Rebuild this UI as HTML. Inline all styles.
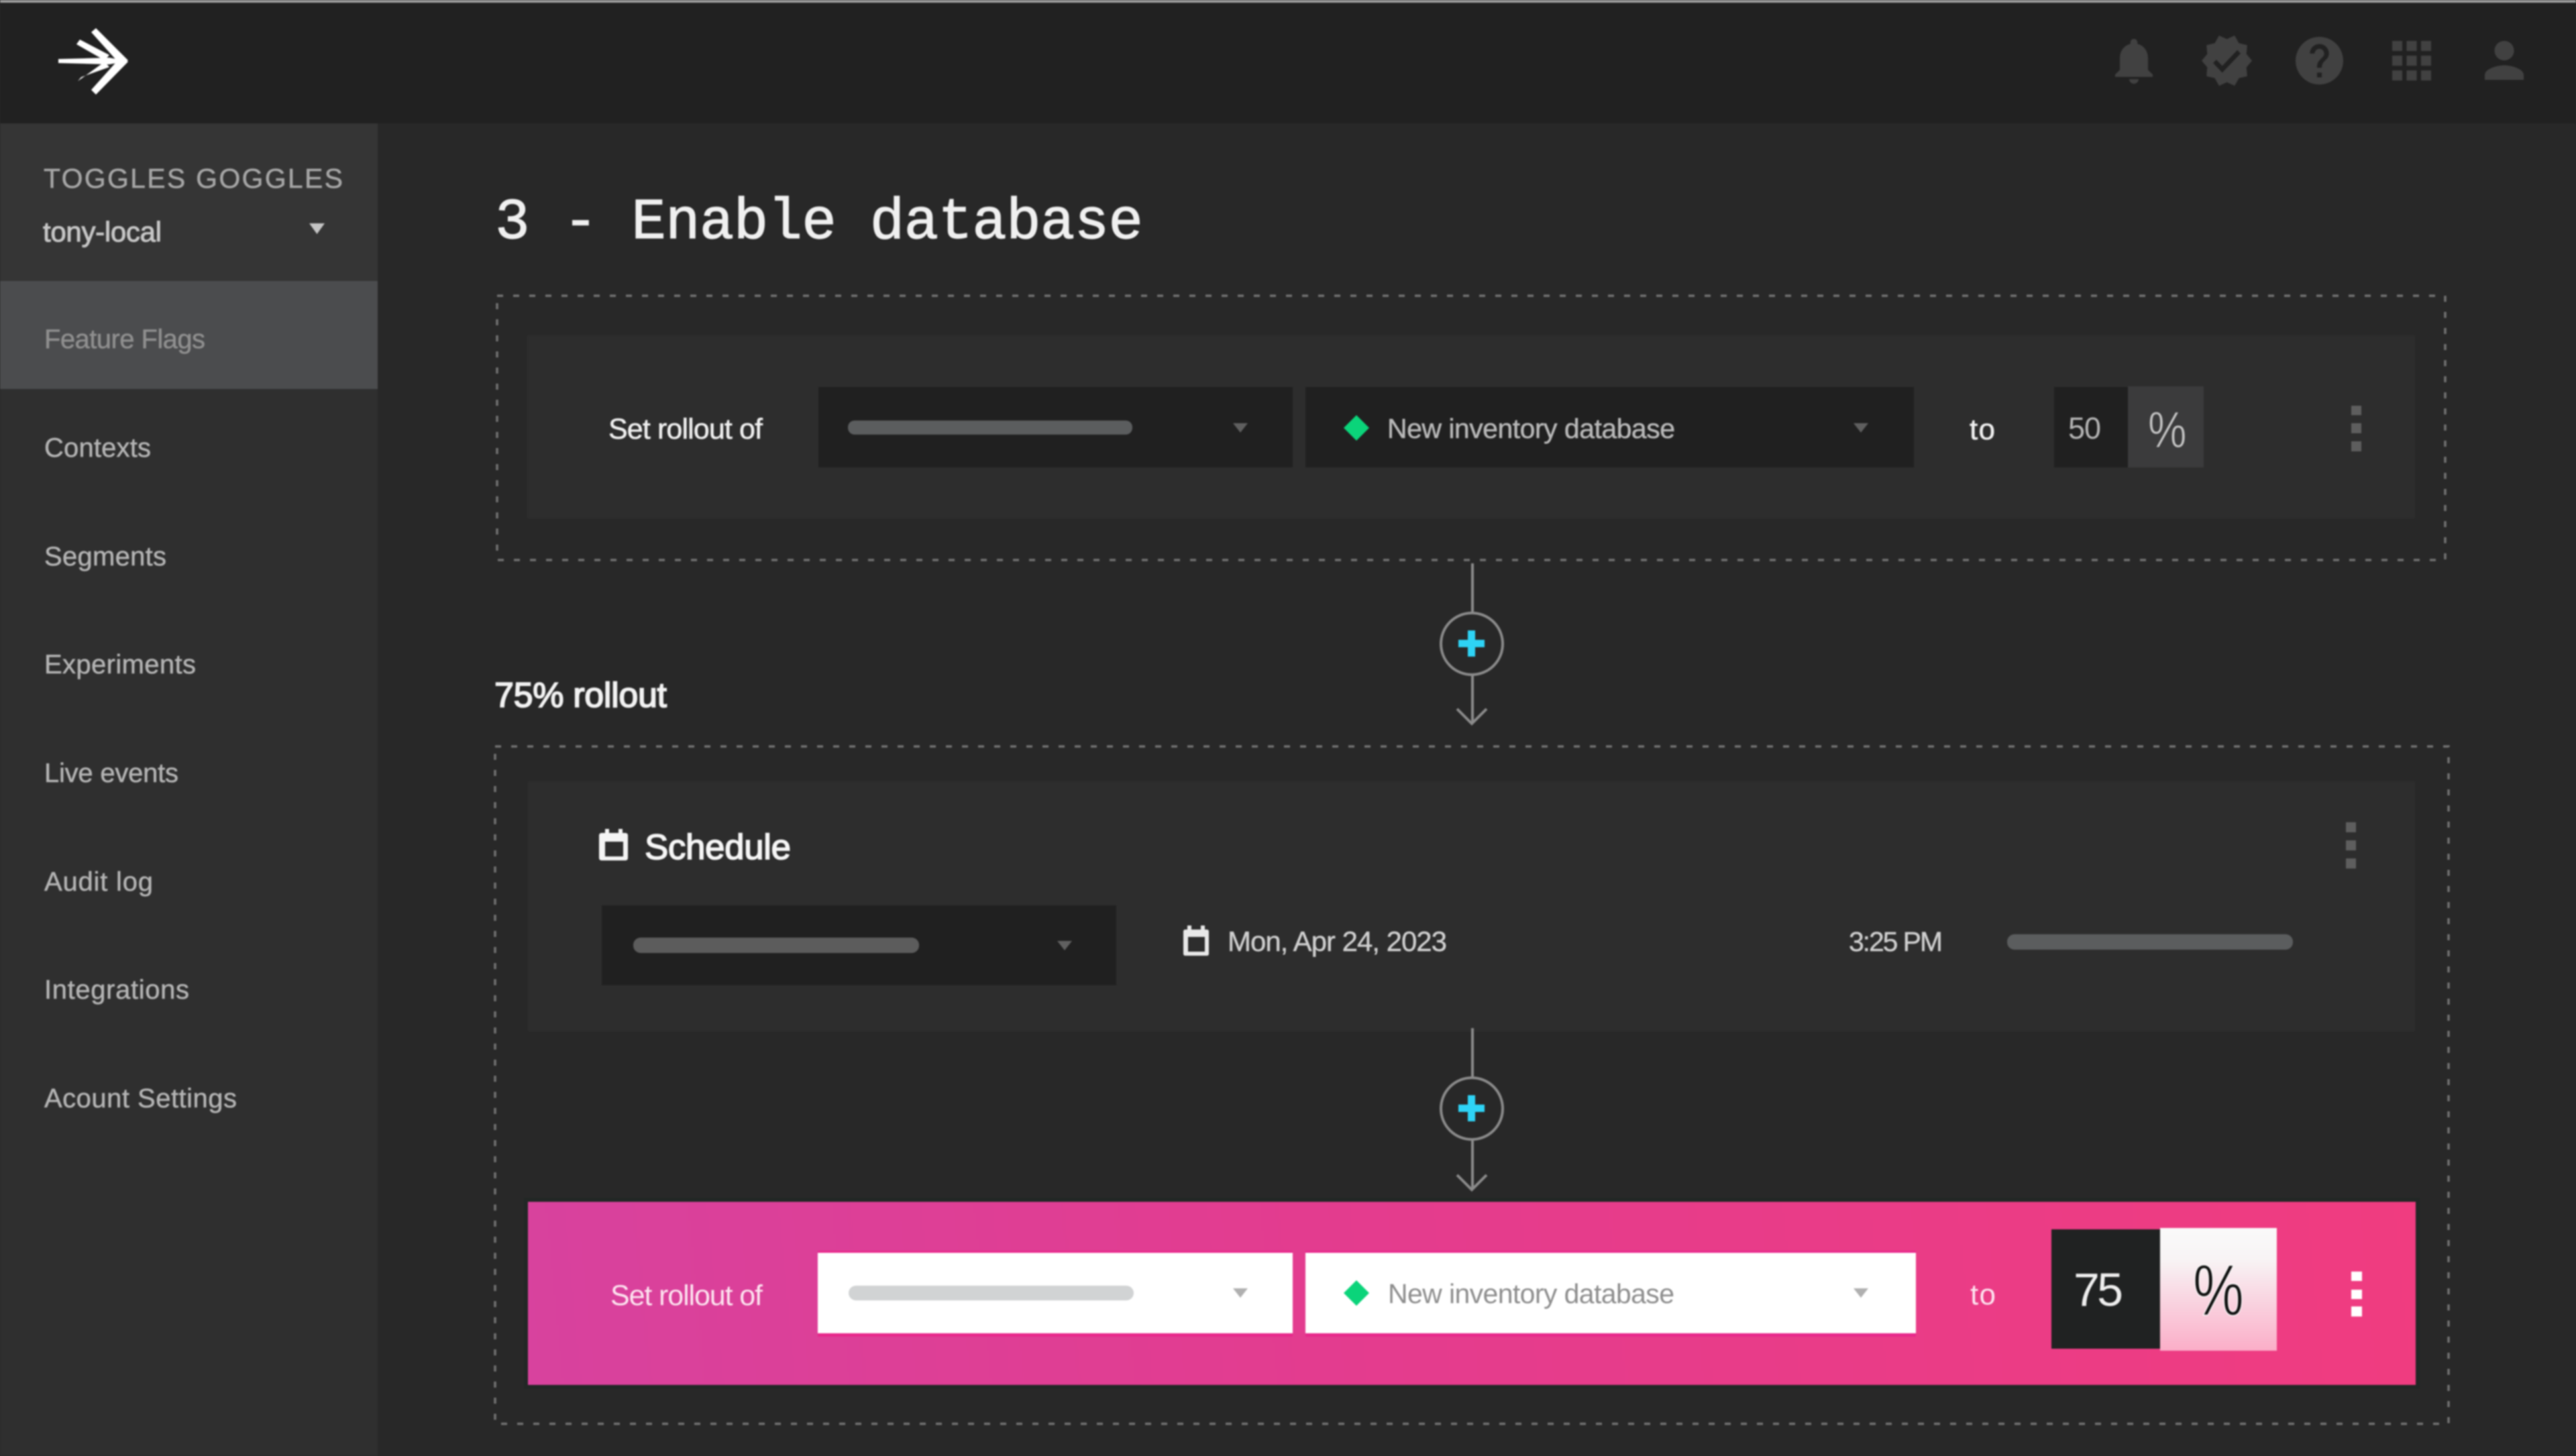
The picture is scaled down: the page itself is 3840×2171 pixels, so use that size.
<!DOCTYPE html>
<html>
<head>
<meta charset="utf-8">
<title>3 - Enable database</title>
<style>
html,body{margin:0;padding:0;background:#282828;width:3840px;height:2171px;overflow:hidden}
svg{display:block;position:absolute;left:0;top:0;filter:blur(1px)}
text{font-family:"Liberation Sans",sans-serif;white-space:pre}
.mono{font-family:"Liberation Mono",monospace}
</style>
</head>
<body>
<svg width="3840" height="2171" viewBox="0 0 3840 2171" xmlns="http://www.w3.org/2000/svg">
<defs>
<linearGradient id="pink" gradientUnits="userSpaceOnUse" x1="787" y1="2065" x2="3601" y2="1792">
<stop offset="0" stop-color="#d8429e"/><stop offset=".45" stop-color="#e43c8e"/><stop offset="1" stop-color="#f03c80"/>
</linearGradient>
<linearGradient id="pct" gradientUnits="userSpaceOnUse" x1="0" y1="1831" x2="0" y2="2014">
<stop offset="0" stop-color="#fafafa"/><stop offset=".25" stop-color="#f8f4f5"/><stop offset="1" stop-color="#fbaec8"/>
</linearGradient>
</defs>

<!-- backgrounds -->
<rect width="3840" height="2171" fill="#282828"/>
<rect width="3840" height="184" fill="#212121"/>
<rect width="3840" height="4" fill="#a0a0a0"/>
<rect y="184" width="563" height="1987" fill="#2f2f2f"/>
<rect y="184" width="563" height="235" fill="#353535"/>
<rect y="419" width="563" height="161" fill="#4b4c4e"/>

<!-- logo -->
<g fill="#fff">
<path d="M87 88 L163 86 L190 91 L163 96 L87 94 Z"/>
<path d="M136 48 L143 42 L191 90 L180 97 Z"/>
<path d="M136 134 L143 141 L191 92 L180 85 Z"/>
<path d="M114 66 L119 59 L163 82 L156 90 Z"/>
<path d="M116 121 L121 115 L163 100 L156 92 Z"/>
</g>

<!-- top icons -->
<g fill="#414141">
<path transform="translate(3139,49.4) scale(3.5,3.43)" d="M12 22c1.1 0 2-.9 2-2h-4c0 1.1.9 2 2 2zm6-6v-5c0-3.07-1.63-5.64-4.5-6.32V4c0-.83-.67-1.5-1.5-1.5s-1.5.67-1.5 1.5v.68C7.64 5.36 6 7.92 6 11v5l-2 2v1h16v-1l-2-2z"/>
<path transform="translate(3278.6,47.5) scale(3.41,3.58)" d="M23 12l-2.44-2.78.34-3.68-3.61-.82-1.89-3.18L12 3 8.6 1.54 6.71 4.72l-3.61.81.34 3.68L1 12l2.44 2.78-.34 3.69 3.61.82 1.89 3.18L12 21l3.4 1.46 1.89-3.18 3.61-.82-.34-3.68L23 12zm-13 5l-4-4 1.41-1.41L10 14.17l6.59-6.59L18 9l-8 8z"/>
<path transform="translate(3414.9,47.9) scale(3.55)" d="M12 2C6.48 2 2 6.48 2 12s4.48 10 10 10 10-4.48 10-10S17.52 2 12 2zm1 17h-2v-2h2v2zm2.07-7.75l-.9.92C13.45 12.9 13 13.5 13 15h-2v-.5c0-1.1.45-2.1 1.17-2.83l1.24-1.26c.37-.36.59-.86.59-1.41 0-1.1-.9-2-2-2s-2 .9-2 2H8c0-2.21 1.79-4 4-4s4 1.79 4 4c0 .88-.36 1.68-.93 2.25z"/>
<rect x="3566" y="61" width="15" height="15"/><rect x="3587.5" y="61" width="15" height="15"/><rect x="3609" y="61" width="15" height="15"/>
<rect x="3566" y="83" width="15" height="15"/><rect x="3587.5" y="83" width="15" height="15"/><rect x="3609" y="83" width="15" height="15"/>
<rect x="3566" y="105" width="15" height="15"/><rect x="3587.5" y="105" width="15" height="15"/><rect x="3609" y="105" width="15" height="15"/>
<path transform="translate(3689.5,46.5) scale(3.63)" d="M12 12c2.21 0 4-1.79 4-4s-1.79-4-4-4-4 1.79-4 4 1.79 4 4 4zm0 2c-2.67 0-8 1.34-8 4v2h16v-2c0-2.66-5.33-4-8-4z"/>
</g>

<!-- sidebar -->
<text x="65" y="280" font-size="41" fill="#a6a6a6" stroke="#a6a6a6" stroke-width=".5" textLength="446">TOGGLES GOGGLES</text>
<text x="64" y="360" font-size="42" fill="#c6c6c6" stroke="#c6c6c6" stroke-width="1" textLength="177">tony-local</text>
<path d="M461 333 H484 L472.5 349 Z" fill="#c4c4c4"/>
<g font-size="40" stroke-width=".5">
<text x="66" y="519" fill="#8f8f8f" stroke="#8f8f8f" textLength="240">Feature Flags</text>
<g fill="#b4b4b4" stroke="#b4b4b4">
<text x="66" y="681" textLength="159">Contexts</text>
<text x="66" y="843" textLength="182">Segments</text>
<text x="66" y="1004" textLength="226">Experiments</text>
<text x="66" y="1166" textLength="200">Live events</text>
<text x="66" y="1328" textLength="162">Audit log</text>
<text x="66" y="1489" textLength="216">Integrations</text>
<text x="66" y="1651" textLength="287">Acount Settings</text>
</g>
</g>

<!-- title -->
<text class="mono" x="738" y="355" font-size="86" fill="#f0f0f0" stroke="#f0f0f0" stroke-width="1.2" textLength="966">3 - Enable database</text>

<!-- first block -->
<rect x="741" y="441" width="2904" height="394" fill="none" stroke="#727272" stroke-width="3.5" stroke-dasharray="9 15"/>
<rect x="786" y="500" width="2814" height="273" fill="#2d2d2d"/>
<text x="907" y="654" font-size="43" fill="#f0f0f0" stroke="#f0f0f0" stroke-width=".6" textLength="230">Set rollout of</text>
<rect x="1220" y="577" width="707" height="120" fill="#202020"/>
<rect x="1264" y="627" width="424" height="21" rx="10" fill="#5b5d5e"/>
<path d="M1838 631 H1860 L1849 645 Z" fill="#5f5f5f"/>
<rect x="1946" y="577" width="907" height="120" fill="#202020"/>
<path d="M2022 619 L2041 638 L2022 657 L2003 638 Z" fill="#0bd47a"/>
<text x="2068" y="653" font-size="41" fill="#b8b8b8" stroke="#b8b8b8" stroke-width=".5" textLength="429">New inventory database</text>
<path d="M2763 631 H2785 L2774 645 Z" fill="#5f5f5f"/>
<text x="2936" y="655" font-size="44" fill="#f0f0f0" stroke="#f0f0f0" stroke-width=".6" textLength="38">to</text>
<rect x="3062" y="577" width="110" height="120" fill="#202020"/>
<rect x="3172" y="576" width="113" height="121" fill="#3b3b3c"/>
<text x="3083" y="654" font-size="45" fill="#b4b4b4" textLength="49">50</text>
<text transform="translate(3202,667) scale(.85,1)" font-size="76" fill="#c4c4c4" stroke="#3b3b3c" stroke-width="1">%</text>
<g fill="#5e5e5e"><rect x="3505" y="605" width="15" height="14"/><rect x="3505" y="631" width="15" height="15"/><rect x="3505" y="658" width="15" height="15"/></g>

<!-- connector 1 -->
<g fill="none" stroke="#8a8a8a" stroke-width="4">
<path d="M2195 840 V914"/>
<circle cx="2194" cy="960" r="46"/>
<path d="M2195 1006 V1078"/>
<path d="M2172 1057 L2194 1079 L2216 1057"/>
</g>
<path d="M2188 940 h11 v14 h14 v11 h-14 v14 h-11 v-14 h-14 v-11 h14 z" fill="#2ed3f5"/>

<text x="737" y="1054" font-size="52" fill="#f2f2f2" stroke="#f2f2f2" stroke-width="1.8" textLength="257">75% rollout</text>

<!-- second block -->
<rect x="738" y="1113" width="2912" height="1010" fill="none" stroke="#727272" stroke-width="3.5" stroke-dasharray="9 15"/>
<rect x="787" y="1165" width="2813" height="373" fill="#2d2d2d"/>

<path fill-rule="evenodd" fill="#f4f4f4" d="M897 1242 h5 v-6 h6 v6 h14 v-6 h6 v6 h4 q4 0 4 4 v33 q0 4 -4 4 h-35 q-4 0 -4 -4 v-33 q0 -4 4 -4z M902 1255 v22 h27 v-22z"/>
<text x="961" y="1281" font-size="53" fill="#f6f6f6" stroke="#f6f6f6" stroke-width="1.6" textLength="218">Schedule</text>
<g fill="#5e5e5e"><rect x="3497" y="1226" width="15" height="15"/><rect x="3497" y="1253" width="15" height="15"/><rect x="3497" y="1280" width="15" height="15"/></g>

<rect x="897" y="1350" width="767" height="119" fill="#202020"/>
<rect x="944" y="1398" width="426" height="23" rx="11" fill="#5c5c5c"/>
<path d="M1576 1403 H1598 L1587 1417 Z" fill="#606060"/>

<path fill-rule="evenodd" fill="#e8e8e8" d="M1767 1386 h3 v-6 h6 v6 h14 v-6 h6 v6 h3 q3 0 3 3 v33 q0 3 -3 3 h-32 q-3 0 -3 -3 v-33 q0 -3 3 -3z M1771 1397 v22 h25 v-22z"/>
<text x="1830" y="1418" font-size="42" fill="#cfcfcf" stroke="#cfcfcf" stroke-width=".4" textLength="327">Mon, Apr 24, 2023</text>
<text x="2756" y="1418" font-size="41" fill="#cfcfcf" stroke="#cfcfcf" stroke-width=".4" textLength="140">3:25 PM</text>
<rect x="2992" y="1393" width="426" height="23" rx="11" fill="#5b5d5e"/>

<!-- connector 2 -->
<g fill="none" stroke="#8a8a8a" stroke-width="4">
<path d="M2195 1533 V1607"/>
<circle cx="2194" cy="1653" r="46"/>
<path d="M2195 1699 V1773"/>
<path d="M2172 1752 L2194 1774 L2216 1752"/>
</g>
<path d="M2188 1633 h11 v14 h14 v11 h-14 v14 h-11 v-14 h-14 v-11 h14 z" fill="#2ed3f5"/>

<!-- pink row -->
<rect x="781" y="1786" width="2826" height="285" fill="#222725"/>
<rect x="787" y="1792" width="2814" height="273" fill="url(#pink)"/>
<text x="910" y="1946" font-size="43" fill="#fde4f0" textLength="227">Set rollout of</text>
<rect x="1219" y="1865" width="708" height="128" fill="#e8288c"/>
<rect x="1946" y="1865" width="910" height="128" fill="#e8288c"/>
<rect x="1219" y="1868" width="708" height="120" fill="#fff"/>
<rect x="1265" y="1917" width="425" height="22" rx="11" fill="#d1d3d4"/>
<path d="M1838 1921 H1860 L1849 1935 Z" fill="#b0b0b0"/>
<rect x="1946" y="1868" width="910" height="120" fill="#fff"/>
<path d="M2022 1909 L2041 1928 L2022 1947 L2003 1928 Z" fill="#0bd47a"/>
<text x="2069" y="1943" font-size="41" fill="#8e8e8e" textLength="427">New inventory database</text>
<path d="M2763 1921 H2785 L2774 1935 Z" fill="#b0b0b0"/>
<text x="2937" y="1945" font-size="44" fill="#fde4f0" textLength="38">to</text>
<rect x="3058" y="1833" width="162" height="178" fill="#202222"/>
<rect x="3220" y="1831" width="174" height="183" fill="url(#pct)"/>
<text x="3091" y="1947" font-size="70" fill="#eeeeee" textLength="74">75</text>
<text transform="translate(3269,1961) scale(.79,1)" font-size="108" fill="#111" stroke="url(#pct)" stroke-width="1.5">%</text>
<g fill="#fff"><rect x="3505" y="1896" width="16" height="14"/><rect x="3505" y="1923" width="16" height="14"/><rect x="3505" y="1948" width="16" height="15"/></g>
</svg>
</body>
</html>
